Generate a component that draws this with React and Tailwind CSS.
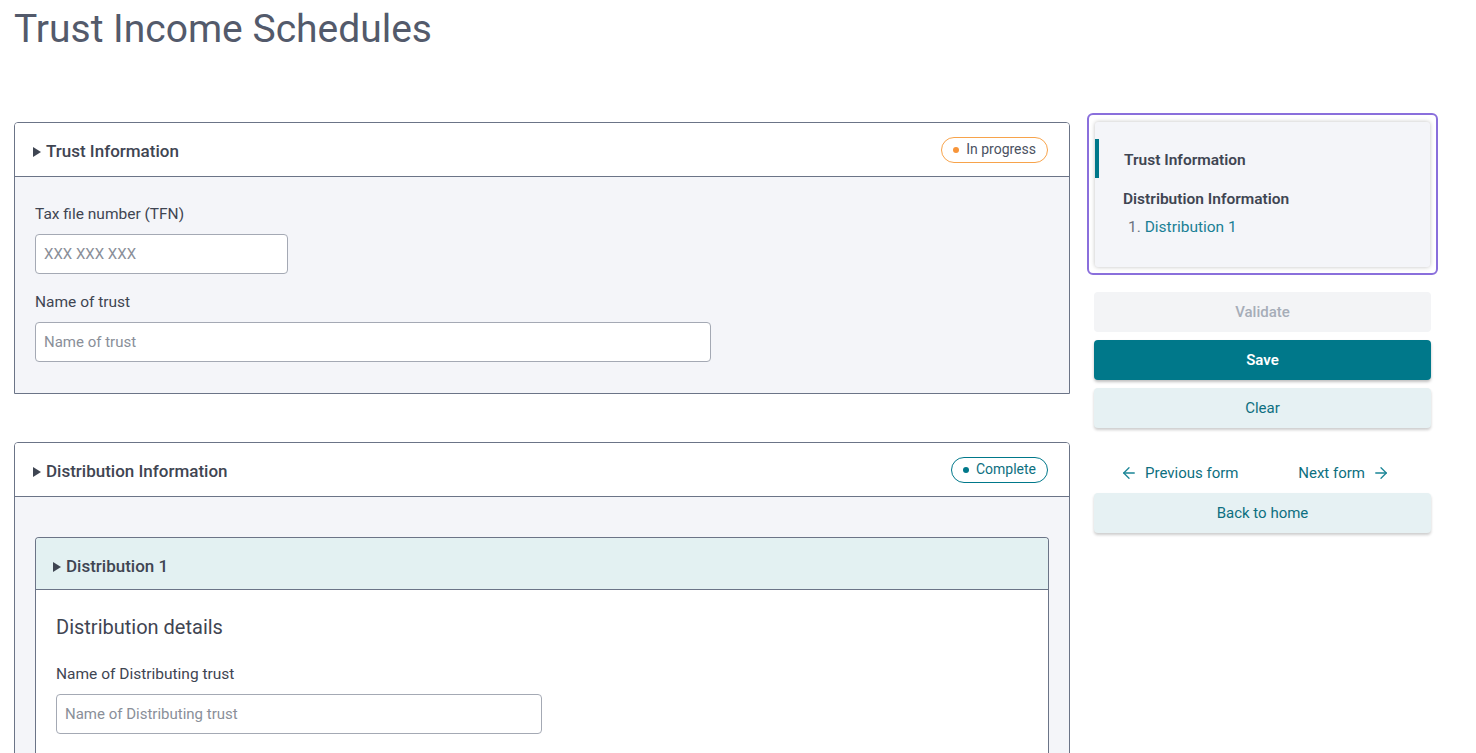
import { ArrowLeft, ArrowRight } from "lucide-react";

const font = { fontFamily: "Roboto, 'Noto Sans', sans-serif" };

function Caret() {
  return (
    <svg width="8" height="10" viewBox="0 0 8 10" className="mr-[5px] shrink-0">
      <path d="M0 0 L8 5 L0 10 Z" fill="#3f4552" />
    </svg>
  );
}

function Badge({ label, tone }) {
  const orange = tone === "orange";
  return (
    <span
      className={`flex items-center gap-[7px] h-[26px] px-[11px] rounded-full border text-[14px] text-[#4b5262] ${
        orange ? "border-[#f7a34b]" : "border-[#00788a]"
      }`}
    >
      <span className={`w-[6px] h-[6px] rounded-full ${orange ? "bg-[#f7953a]" : "bg-[#00788a]"}`} />
      <span className={orange ? "text-[#4b5262]" : "text-[#0d6f80]"}>{label}</span>
    </span>
  );
}

function Field({ label, placeholder, width }) {
  return (
    <div className="flex flex-col">
      <label className="text-[15.5px] text-[#3f4552] leading-[20px] mb-[10px]">{label}</label>
      <input
        placeholder={placeholder}
        className={`${width} h-[40px] bg-white border border-[#a4a9b4] rounded-[4px] px-[8px] text-[15px] placeholder:text-[#8a8f99] outline-none`}
      />
    </div>
  );
}

function Section({ title, badge, tone, children }) {
  return (
    <div className="border border-[#6b7487] rounded-t-[4px] overflow-hidden">
      <div className="h-[54px] bg-white flex items-center justify-between pl-[18px] pr-[21px] border-b border-[#6b7487]">
        <div className="flex items-center text-[17px] font-medium text-[#3f4552] pt-[5px]">
          <Caret />
          {title}
        </div>
        <Badge label={badge} tone={tone} />
      </div>
      <div className="bg-[#f4f5f9]">{children}</div>
    </div>
  );
}

function SideButton({ children, variant }) {
  const styles = {
    disabled: "bg-[#f3f4f6] text-[#a6adb8] font-medium",
    primary: "bg-[#00788a] text-white font-semibold shadow-[0_2px_3px_rgba(0,0,0,0.25)]",
    light: "bg-[#e6f1f3] text-[#0d6f80] shadow-[0_2px_3px_rgba(0,0,0,0.2)]",
  };
  return (
    <button className={`w-full h-[40px] rounded-[4px] text-[15px] ${styles[variant]}`}>{children}</button>
  );
}

export default function App() {
  return (
    <div className="min-h-screen bg-white pl-[14px]" style={font}>
      <h1 className="pt-[5px] text-[39px] leading-[48px] text-[#535a6b] font-normal">Trust Income Schedules</h1>

      <div className="flex mt-[60px] gap-[17px]">
        <div className="w-[1056px] pt-[9px] flex flex-col gap-[48px]">
          <Section title="Trust Information" badge="In progress" tone="orange">
            <div className="pl-[20px] pt-[27px] pb-[31px] flex flex-col gap-[18px]">
              <Field label="Tax file number (TFN)" placeholder="XXX XXX XXX" width="w-[253px]" />
              <Field label="Name of trust" placeholder="Name of trust" width="w-[676px]" />
            </div>
          </Section>

          <Section title="Distribution Information" badge="Complete" tone="teal">
            <div className="pt-[40px] px-[20px]">
              <div className="border border-[#6b7487] border-b-0 rounded-t-[4px] overflow-hidden">
                <div className="h-[52px] bg-[#e3f1f2] flex items-center pl-[17px] border-b border-[#6b7487] text-[17px] font-medium text-[#3f4552] pt-[6px]">
                  <Caret />
                  Distribution 1
                </div>
                <div className="bg-white pl-[20px] pt-[24px] pb-[40px]">
                  <h3 className="text-[20px] text-[#3f4552] leading-[26px] mb-[24px]">Distribution details</h3>
                  <Field label="Name of Distributing trust" placeholder="Name of Distributing trust" width="w-[486px]" />
                </div>
              </div>
            </div>
          </Section>
        </div>

        <div className="w-[351px] flex flex-col">
          <div className="border-2 border-[#8a6fdc] rounded-[6px] p-[6px] pt-[7px]">
            <div className="bg-[#f4f5f9] rounded-[3px] shadow-[0_0_4px_rgba(0,0,0,0.25)] pt-[17px] pb-[30px]">
              <div className="flex items-center h-[39px] border-l-[4px] border-[#00788a] pl-[25px] pt-[4px] text-[15.5px] font-semibold text-[#3f4552]">
                Trust Information
              </div>
              <div className="pl-[28px] mt-[11px] text-[15.5px] font-semibold text-[#3f4552] leading-[20px]">
                Distribution Information
              </div>
              <div className="pl-[33px] mt-[8px] text-[15.5px] leading-[20px]">
                <span className="text-[#6b7280]">1. </span>
                <span className="text-[#1a7f95]">Distribution 1</span>
              </div>
            </div>
          </div>

          <div className="px-[7px] mt-[17px] flex flex-col gap-[8px]">
            <SideButton variant="disabled">Validate</SideButton>
            <SideButton variant="primary">Save</SideButton>
            <SideButton variant="light">Clear</SideButton>
          </div>

          <div className="mt-[33px] h-[24px] flex items-center justify-between pl-[33px] pr-[48px] text-[15px] text-[#0d6f80]">
            <span className="flex items-center gap-[7px]">
              <ArrowLeft size={18} strokeWidth={1.75} className="text-[#1a8597]" />
              Previous form
            </span>
            <span className="flex items-center gap-[7px]">
              Next form
              <ArrowRight size={18} strokeWidth={1.75} className="text-[#1a8597]" />
            </span>
          </div>

          <div className="px-[7px] mt-[8px]">
            <SideButton variant="light">Back to home</SideButton>
          </div>
        </div>
      </div>
    </div>
  );
}
